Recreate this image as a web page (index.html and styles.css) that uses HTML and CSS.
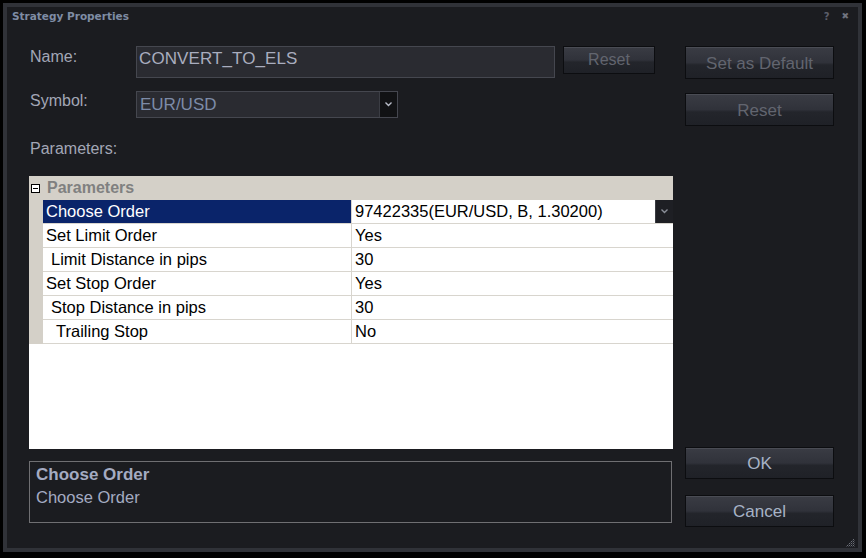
FILE: index.html
```html
<!DOCTYPE html>
<html lang="en">
<head>
    <meta charset="UTF-8">
    <title>Strategy Properties</title>
    <link rel="stylesheet" href="styles.css">
</head>
<body>
    <div class="window">
        <div class="titlebar">
            <span class="title">Strategy Properties</span>
            <span class="title-btn">?</span>
            <span class="title-btn close">&#x2716;</span>
        </div>

        <div class="main">
            <div class="left">
                <div class="field-row">
                    <label class="field-label">Name:</label>
                    <div class="text-input">CONVERT_TO_ELS</div>
                    <button class="btn btn-small disabled">Reset</button>
                </div>
                <div class="field-row symbol-row">
                    <label class="field-label">Symbol:</label>
                    <div class="select">
                        <span class="select-value">EUR/USD</span>
                        <span class="select-arrow">
                            <svg width="7" height="5" viewBox="0 0 7 5"><path d="M0.5 0.5 L3.5 3.5 L6.5 0.5" fill="none" stroke="#b8bcc8" stroke-width="1.4"/></svg>
                        </span>
                    </div>
                </div>

                <div class="section-label">Parameters:</div>

                <div class="grid">
                    <div class="grid-header">
                        <span class="collapse-box"></span>
                        <span class="grid-header-text">Parameters</span>
                    </div>
                    <div class="grid-row selected">
                        <div class="cell-name">Choose Order</div>
                        <div class="cell-value">
                            <span>97422335(EUR/USD, B, 1.30200)</span>
                            <span class="cell-drop">
                                <svg width="7" height="5" viewBox="0 0 7 5"><path d="M0.5 0.5 L3.5 3.5 L6.5 0.5" fill="none" stroke="#8a8e98" stroke-width="1.4"/></svg>
                            </span>
                        </div>
                    </div>
                    <div class="grid-row">
                        <div class="cell-name">Set Limit Order</div>
                        <div class="cell-value">Yes</div>
                    </div>
                    <div class="grid-row">
                        <div class="cell-name indent">Limit Distance in pips</div>
                        <div class="cell-value">30</div>
                    </div>
                    <div class="grid-row">
                        <div class="cell-name">Set Stop Order</div>
                        <div class="cell-value">Yes</div>
                    </div>
                    <div class="grid-row">
                        <div class="cell-name indent">Stop Distance in pips</div>
                        <div class="cell-value">30</div>
                    </div>
                    <div class="grid-row">
                        <div class="cell-name indent2">Trailing Stop</div>
                        <div class="cell-value">No</div>
                    </div>
                </div>

                <div class="description">
                    <div class="desc-title">Choose Order</div>
                    <div class="desc-text">Choose Order</div>
                </div>
            </div>

            <div class="right">
                <button class="btn btn-wide disabled">Set as Default</button>
                <button class="btn btn-wide disabled reset-all">Reset</button>
                <button class="btn btn-wide ok">OK</button>
                <button class="btn btn-wide cancel">Cancel</button>
            </div>
        </div>

        <div class="grip">
            <svg width="9" height="9" viewBox="0 0 9 9">
                <g fill="#6c6f78">
                    <rect x="7" y="1" width="1" height="1"/>
                    <rect x="5" y="3" width="1" height="1"/><rect x="7" y="3" width="1" height="1"/>
                    <rect x="3" y="5" width="1" height="1"/><rect x="5" y="5" width="1" height="1"/><rect x="7" y="5" width="1" height="1"/>
                    <rect x="1" y="7" width="1" height="1"/><rect x="3" y="7" width="1" height="1"/><rect x="5" y="7" width="1" height="1"/><rect x="7" y="7" width="1" height="1"/>
                </g>
                <g fill="#3a3c43">
                    <rect x="6" y="2" width="1" height="1"/><rect x="8" y="2" width="1" height="1"/>
                    <rect x="4" y="4" width="1" height="1"/><rect x="6" y="4" width="1" height="1"/><rect x="8" y="4" width="1" height="1"/>
                    <rect x="2" y="6" width="1" height="1"/><rect x="4" y="6" width="1" height="1"/><rect x="6" y="6" width="1" height="1"/><rect x="8" y="6" width="1" height="1"/>
                    <rect x="0" y="8" width="1" height="1"/><rect x="2" y="8" width="1" height="1"/><rect x="4" y="8" width="1" height="1"/><rect x="6" y="8" width="1" height="1"/><rect x="8" y="8" width="1" height="1"/>
                </g>
            </svg>
        </div>
    </div>
</body>
</html>
```

FILE: styles.css
```css
* {
    margin: 0;
    padding: 0;
    box-sizing: border-box;
}
body {
    background: #000;
    width: 866px;
    height: 558px;
    overflow: hidden;
    font-family: "Liberation Sans", Arial, sans-serif;
}
.window {
    position: relative;
    margin: 3px 4px 0 3px;
    width: 859px;
    height: 549px;
    border: 4px solid #303238;
    background: #1b1c20;
}
.titlebar {
    display: flex;
    align-items: center;
    height: 18px;
    padding: 0 9px 0 5px;
}
.title {
    flex: 1;
    font-family: "DejaVu Sans", Verdana, sans-serif;
    font-weight: bold;
    font-size: 10.5px;
    color: #7f8ca4;
}
.title-btn {
    font-family: "DejaVu Sans", Verdana, sans-serif;
    font-weight: bold;
    font-size: 10px;
    color: #5b5e6a;
    margin-left: 12px;
}
.title-btn.close {
    font-size: 9px;
    color: #70737e;
}
.main {
    display: flex;
    padding: 21px 0 0 22px;
}
.left {
    display: flex;
    flex-direction: column;
    width: 644px;
}
.right {
    display: flex;
    flex-direction: column;
    margin-left: 12px;
    width: 149px;
}
.field-row {
    display: flex;
    align-items: flex-start;
    height: 32px;
}
.symbol-row {
    margin-top: 13px;
    height: 27px;
}
.field-label {
    width: 107px;
    padding-left: 1px;
    font-size: 16px;
    line-height: 22px;
    color: #a3a7b6;
}
.symbol-row .field-label {
    line-height: 20px;
}
.text-input {
    width: 419px;
    height: 32px;
    background: #2a2b31;
    border: 1px solid #45474f;
    padding: 2px 0 0 2px;
    font-size: 17px;
    letter-spacing: 0.1px;
    color: #a9adbf;
}
.select {
    display: flex;
    width: 262px;
    height: 27px;
    background: #2a2b31;
    border: 1px solid #45474f;
}
.select-value {
    flex: 1;
    padding: 3px 0 0 3px;
    font-size: 17px;
    color: #7d8ba8;
}
.select-arrow {
    display: flex;
    align-items: center;
    justify-content: center;
    width: 18px;
    background: #111214;
    border-left: 1px solid #3b3d44;
}
.btn {
    display: flex;
    align-items: center;
    justify-content: center;
    font-family: "Liberation Sans", Arial, sans-serif;
    font-size: 17px;
    color: #a7b3c6;
    border: 1px solid #0c0d10;
    background: linear-gradient(#3a3c44 0%, #30323a 50%, #23252b 58%, #1f2127 100%);
    box-shadow: inset 0 1px 0 #4a4c54;
}
.btn.disabled {
    color: #62656f;
}
.btn-small {
    margin-left: 8px;
    width: 92px;
    height: 28px;
    font-size: 16px;
}
.btn-wide {
    width: 149px;
    height: 33px;
    padding-top: 2px;
}
.reset-all {
    margin-top: 14px;
}
.ok {
    margin-top: 321px;
    height: 32px;
}
.cancel {
    margin-top: 16px;
    height: 32px;
}
.section-label {
    margin-top: 22px;
    height: 18px;
    padding-left: 1px;
    font-size: 16px;
    color: #a3a7b6;
}
.grid {
    margin-top: 18px;
    height: 273px;
    background: #fff;
}
.grid-header {
    display: flex;
    align-items: center;
    height: 24px;
    background: #d4d0c8;
}
.collapse-box {
    position: relative;
    width: 9px;
    height: 9px;
    margin-left: 2px;
    border: 1px solid #000;
    background: #fff;
}
.collapse-box::after {
    content: '';
    position: absolute;
    left: 1px;
    top: 3px;
    width: 5px;
    height: 1px;
    background: #000;
}
.grid-header-text {
    margin-left: 7px;
    font-weight: bold;
    font-size: 16px;
    color: #808080;
}
.grid-row {
    display: flex;
    height: 24px;
    padding-left: 14px;
    background: #d4d0c8;
    font-size: 16.5px;
    color: #000;
}
.cell-name {
    width: 309px;
    padding: 2px 0 0 3px;
    background: #fff;
    border-right: 1px solid #d8d5ce;
    border-bottom: 1px solid #d8d5ce;
    white-space: nowrap;
}
.cell-name.indent {
    padding-left: 8px;
}
.cell-name.indent2 {
    padding-left: 13px;
}
.selected .cell-name {
    background: #0a246a;
    color: #fff;
}
.cell-value {
    flex: 1;
    display: flex;
    padding: 2px 0 0 3px;
    background: #fff;
    border-bottom: 1px solid #d8d5ce;
    white-space: nowrap;
}
.cell-value span:first-child {
    flex: 1;
}
.cell-drop {
    display: flex;
    align-items: center;
    justify-content: center;
    width: 18px;
    height: 23px;
    margin-top: -2px;
    background: #1e1f24;
    border-left: 1px solid #3a3c42;
}
.description {
    margin-top: 12px;
    width: 643px;
    height: 62px;
    border: 1px solid #6f6f72;
    padding: 3px 0 0 6px;
}
.desc-title {
    font-weight: bold;
    font-size: 17px;
    color: #a4abc2;
}
.desc-text {
    margin-top: 3px;
    font-size: 16.5px;
    color: #a4abc2;
}
.grip {
    position: absolute;
    right: 3px;
    bottom: 1px;
    line-height: 0;
}
```
